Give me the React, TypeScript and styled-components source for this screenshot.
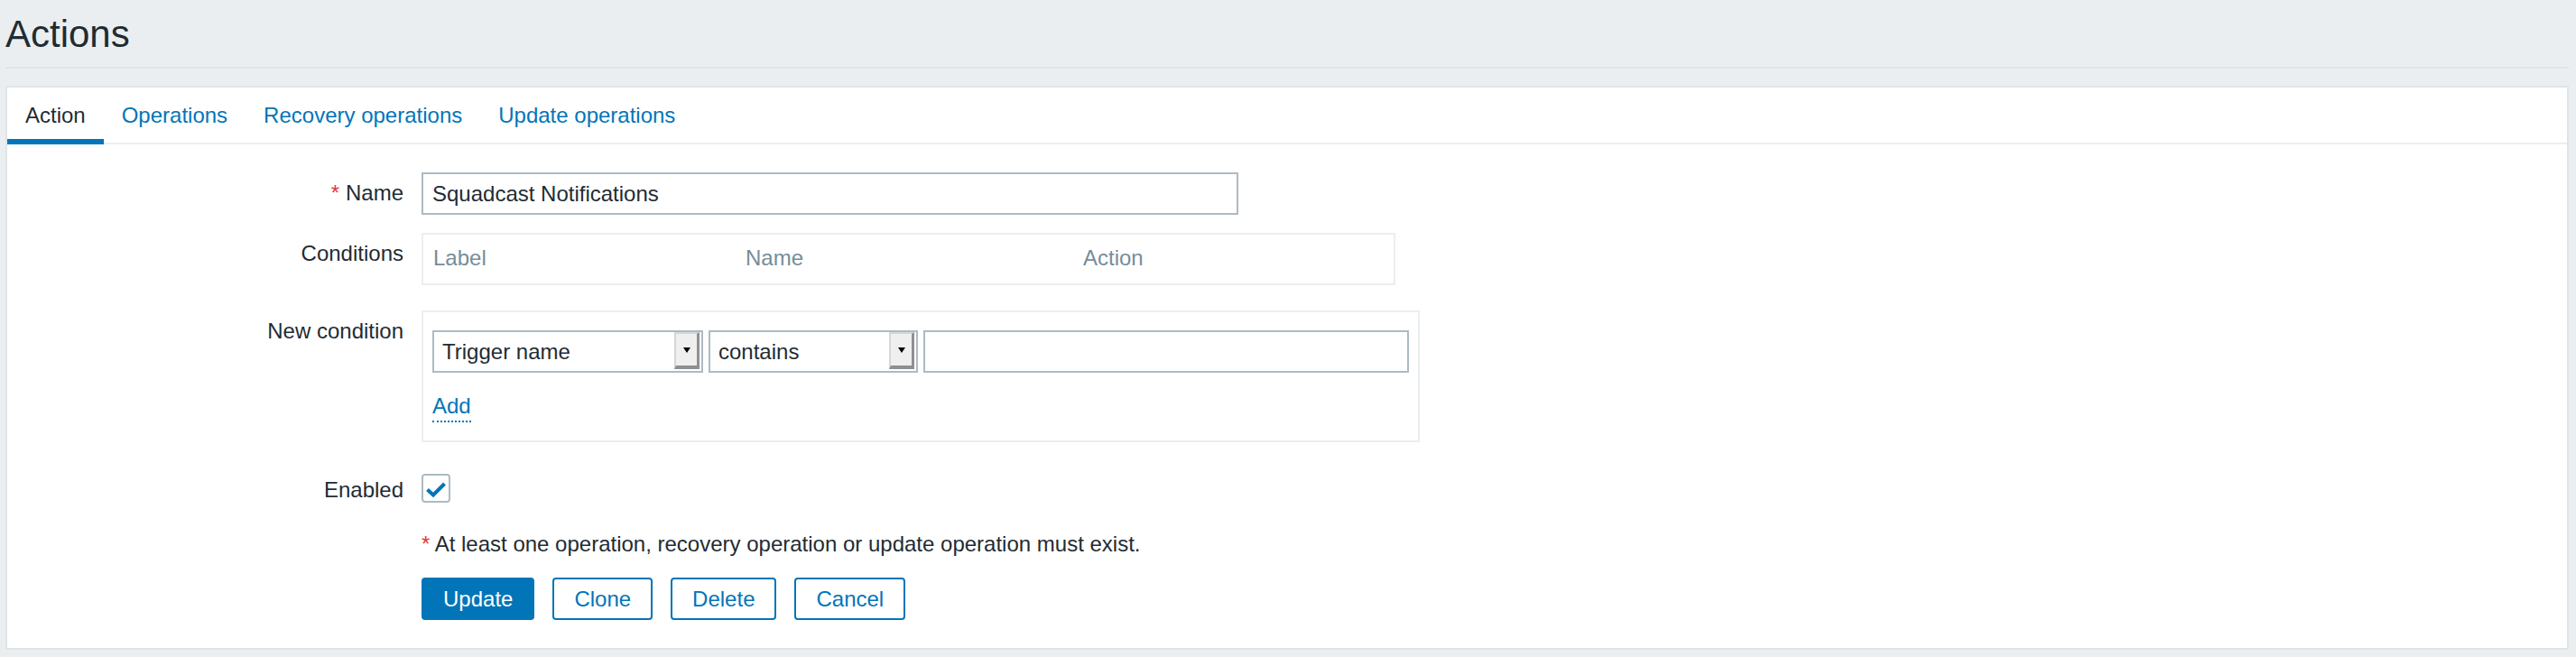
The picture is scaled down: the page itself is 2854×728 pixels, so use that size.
import React from "react";
import styled, { createGlobalStyle } from "styled-components";

const GlobalStyle = createGlobalStyle`
  html, body { margin: 0; padding: 0; background: #ebeef0; }
  body { font-family: "Liberation Sans", Arial, sans-serif; color: #1f2c33; }
  * { box-sizing: border-box; }
`;

const Page = styled.div`
  padding: 0 8px 0 6px;
  min-height: 728px;
`;

const Header = styled.header`
  padding: 14px 0 12px;
  border-bottom: 2px solid #dfe4e7;
`;

const Title = styled.h1`
  margin: 0;
  font-size: 42px;
  line-height: 48px;
  font-weight: normal;
  color: #1f2c33;
`;

const Panel = styled.section`
  margin-top: 19px;
  border: 2px solid #dfe4e7;
  background: #ffffff;
`;

const TabBar = styled.ul`
  display: flex;
  margin: 0;
  padding: 0;
  list-style: none;
  border-bottom: 2px solid #ebeef0;
`;

const Tab = styled.li<{ $active?: boolean }>`
  padding: 17px 20px 18px;
  margin-bottom: -2px;
  font-size: 24px;
  line-height: 28px;
  color: ${(p) => (p.$active ? "#1f2c33" : "#0275b8")};
  box-shadow: ${(p) => (p.$active ? "inset 0 -6px 0 #0275b8" : "none")};
  cursor: pointer;
`;

const Form = styled.div`
  display: flex;
  flex-direction: column;
  padding: 31px 0 31px;
`;

const Row = styled.div<{ $mt?: number }>`
  display: grid;
  grid-template-columns: 439px 1fr;
  column-gap: 20px;
  margin-top: ${(p) => p.$mt ?? 0}px;
  align-items: start;
`;

const Label = styled.label`
  text-align: right;
  font-size: 24px;
  line-height: 28px;
  padding-top: 9px;
  color: #1f2c33;
`;

const Asterisk = styled.span<{ $gap?: number }>`
  color: #e33734;
  margin-right: ${(p) => p.$gap ?? 7}px;
`;

const TextInput = styled.input<{ $w: number }>`
  width: ${(p) => p.$w}px;
  height: 47px;
  border: 2px solid #acbbc2;
  border-radius: 0;
  padding: 0 10px;
  font-family: "Liberation Sans", Arial, sans-serif;
  font-size: 24px;
  color: #1f2c33;
  background: #ffffff;
  outline: none;
  margin: 0;
`;

const ConditionsTable = styled.div`
  width: 1079px;
  border: 2px solid #ebeef0;
  display: grid;
  grid-template-columns: 346px 374px 1fr;
`;

const HeaderCell = styled.div`
  padding: 12px 11px 14px;
  font-size: 24px;
  line-height: 28px;
  color: #768d99;
`;

const NewConditionBox = styled.div`
  justify-self: start;
  border: 2px solid #ebeef0;
  padding: 20px 10px;
`;

const ConditionInputs = styled.div`
  display: flex;
  gap: 6px;
`;

const Select = styled.div<{ $w: number }>`
  width: ${(p) => p.$w}px;
  height: 47px;
  border: 2px solid #acbbc2;
  background: #ffffff;
  display: flex;
  align-items: stretch;
`;

const SelectText = styled.span`
  flex: 1;
  display: flex;
  align-items: center;
  padding-left: 9px;
  font-size: 24px;
  color: #1f2c33;
`;

const SelectButton = styled.span`
  width: 28px;
  margin: 0 2px 2px 0;
  background: #efefef;
  border-top: 2px solid #d6d6d6;
  border-left: 2px solid #d6d6d6;
  border-right: 3px solid #8f8f8f;
  border-bottom: 4px solid #8f8f8f;
  display: flex;
  align-items: center;
  justify-content: center;
`;

const AddLink = styled.a`
  display: inline-block;
  margin-top: 23px;
  font-size: 24px;
  line-height: 28px;
  padding-bottom: 2px;
  color: #0275b8;
  border-bottom: 2px dotted #0275b8;
  text-decoration: none;
  cursor: pointer;
`;

const AddWrap = styled.div``;

const Checkbox = styled.span`
  width: 32px;
  height: 32px;
  margin-top: 5px;
  border: 2px solid #acbbc2;
  border-radius: 4px;
  background: #ffffff;
  display: flex;
`;

const Note = styled.div`
  font-size: 24px;
  line-height: 28px;
  color: #1f2c33;
`;

const ButtonRow = styled.div`
  display: flex;
  gap: 20px;
`;

const Button = styled.button<{ $primary?: boolean }>`
  height: 47px;
  padding: 0 22px;
  border: 2px solid #0275b8;
  border-radius: 4px;
  font-family: "Liberation Sans", Arial, sans-serif;
  font-size: 24px;
  line-height: 28px;
  background: ${(p) => (p.$primary ? "#0275b8" : "#ffffff")};
  color: ${(p) => (p.$primary ? "#ffffff" : "#0275b8")};
  cursor: pointer;
  margin: 0;
`;

const Arrow = () => (
  <svg width="8" height="6" viewBox="0 0 8 6">
    <path d="M0 0 H8 L4 6 Z" fill="#000" />
  </svg>
);

const Check = () => (
  <svg width="28" height="28" viewBox="0 0 28 28">
    <polyline points="4.5,15.5 11,21.5 23.5,9" fill="none" stroke="#0275b8" strokeWidth="4" />
  </svg>
);

export default function App() {
  return (
    <>
      <GlobalStyle />
      <Page>
        <Header>
          <Title>Actions</Title>
        </Header>
        <Panel>
          <TabBar>
            <Tab $active>Action</Tab>
            <Tab>Operations</Tab>
            <Tab>Recovery operations</Tab>
            <Tab>Update operations</Tab>
          </TabBar>
          <Form>
            <Row>
              <Label>
                <Asterisk>*</Asterisk>Name
              </Label>
              <TextInput $w={905} defaultValue="Squadcast Notifications" />
            </Row>
            <Row $mt={20}>
              <Label>Conditions</Label>
              <ConditionsTable>
                <HeaderCell>Label</HeaderCell>
                <HeaderCell>Name</HeaderCell>
                <HeaderCell>Action</HeaderCell>
              </ConditionsTable>
            </Row>
            <Row $mt={28}>
              <Label>New condition</Label>
              <NewConditionBox>
                <ConditionInputs>
                  <Select $w={300}>
                    <SelectText>Trigger name</SelectText>
                    <SelectButton>
                      <Arrow />
                    </SelectButton>
                  </Select>
                  <Select $w={232}>
                    <SelectText>contains</SelectText>
                    <SelectButton>
                      <Arrow />
                    </SelectButton>
                  </Select>
                  <TextInput $w={538} defaultValue="" />
                </ConditionInputs>
                <AddWrap>
                  <AddLink>Add</AddLink>
                </AddWrap>
              </NewConditionBox>
            </Row>
            <Row $mt={30}>
              <Label>Enabled</Label>
              <Checkbox>
                <Check />
              </Checkbox>
            </Row>
            <Row $mt={32}>
              <span />
              <Note>
                <Asterisk $gap={0}>*</Asterisk> At least one operation, recovery operation or update operation must exist.
              </Note>
            </Row>
            <Row $mt={23}>
              <span />
              <ButtonRow>
                <Button $primary>Update</Button>
                <Button>Clone</Button>
                <Button>Delete</Button>
                <Button>Cancel</Button>
              </ButtonRow>
            </Row>
          </Form>
        </Panel>
      </Page>
    </>
  );
}
